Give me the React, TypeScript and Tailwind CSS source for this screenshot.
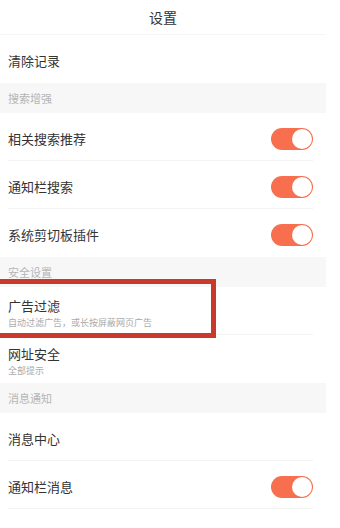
const FONT = '"Noto Sans CJK SC", "Noto Sans", sans-serif'

function Toggle() {
  return (
    <div className="flex h-[22px] w-[42px] items-center justify-end rounded-full bg-[#f76f4f] pr-[1px]">
      <div className="h-[20px] w-[20px] rounded-full bg-white" />
    </div>
  )
}

function Section({ label }: { label: string }) {
  return (
    <div className="flex h-[30px] items-center bg-[#f7f7f7] pl-2 pt-px text-[11px] text-[#b5b5b5]">
      {label}
    </div>
  )
}

function Row({
  title,
  sub,
  toggle,
  line = true,
}: {
  title: string
  sub?: string
  toggle?: boolean
  line?: boolean
}) {
  return (
    <div className="ml-2 mr-[13px] h-[48px]">
      <div className="flex h-[47px] items-center justify-between pt-[4px]">
        <div className="flex flex-col">
          <span className="text-[13px] leading-[18px] text-[#333]">{title}</span>
          {sub && <span className="mt-px text-[9px] leading-[13px] text-[#aaa]">{sub}</span>}
        </div>
        {toggle && <Toggle />}
      </div>
      <div className={line ? 'h-px bg-[#f3f3f3]' : 'h-px'} />
    </div>
  )
}

export default function App() {
  return (
    <div className="relative h-[528px] w-[340px] overflow-hidden bg-white" style={{ fontFamily: FONT }}>
      <div className="w-[326px]">
        <div className="flex h-[35px] items-center justify-center border-b border-[#f5f5f5] text-[14px] text-[#333]">
          设置
        </div>
        <Row title="清除记录" line={false} />
        <Section label="搜索增强" />
        <Row title="相关搜索推荐" toggle />
        <Row title="通知栏搜索" toggle />
        <Row title="系统剪切板插件" toggle line={false} />
        <Section label="安全设置" />
        <Row title="广告过滤" sub="自动过滤广告，或长按屏蔽网页广告" />
        <Row title="网址安全" sub="全部提示" line={false} />
        <Section label="消息通知" />
        <Row title="消息中心" />
        <Row title="通知栏消息" toggle />
      </div>
      <div className="absolute left-[-5px] top-[279px] h-[59px] w-[221px] border-[5px] border-[#c9392c]" />
    </div>
  )
}
